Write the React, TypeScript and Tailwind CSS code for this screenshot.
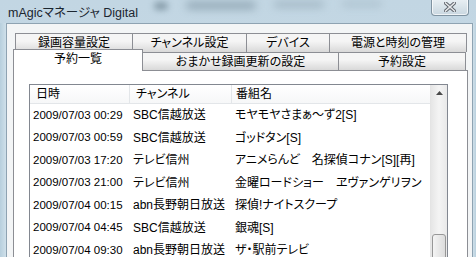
const rows = [
  { date: '2009/07/03 00:29', ch: 'SBC信越放送', title: 'モヤモヤさまぁ～ず2[S]' },
  { date: '2009/07/03 00:59', ch: 'SBC信越放送', title: 'ゴッドタン[S]' },
  { date: '2009/07/03 17:20', ch: 'テレビ信州', title: 'アニメらんど　名探偵コナン[S][再]' },
  { date: '2009/07/03 21:00', ch: 'テレビ信州', title: '金曜ロードショー　ヱヴァンゲリヲン　新劇場版：序' },
  { date: '2009/07/04 00:15', ch: 'abn長野朝日放送', title: '探偵!ナイトスクープ' },
  { date: '2009/07/04 04:45', ch: 'SBC信越放送', title: '銀魂[S]' },
  { date: '2009/07/04 09:30', ch: 'abn長野朝日放送', title: 'ザ・駅前テレビ' },
];

const backTabs = [
  { label: '録画容量設定', w: 'w-[117px]' },
  { label: 'チャンネル設定', w: 'w-[114px]' },
  { label: 'デバイス', w: 'w-[83px]' },
  { label: '電源と時刻の管理', w: 'w-[138px] border-r' },
];

const tabBase =
  'flex items-start justify-center border-l border-t border-[#8c8e94] bg-gradient-to-b from-[#f5f5f5] from-40% to-[#d9d9d9] text-[12px] leading-[16px] text-black';

export default function App() {
  return (
    <div className="w-[476px] h-[257px] overflow-hidden bg-gradient-to-b from-[#c2d6e3] to-[#c9dce7] font-['Liberation_Sans','Noto_Sans_CJK_JP',sans-serif] [font-feature-settings:'palt']">
      {/* Title bar */}
      <div className="h-[23px] flex items-start">
        <span className="ml-[8px] mt-[5px] text-[12.5px] leading-[16px] text-[#1b2630]">
          mAgicマネージャ Digital
        </span>
        <div className="flex-1 flex items-start gap-[18px] pl-[16px] pt-[2px] opacity-60">
          <div className="w-[14px] h-[8px] rounded-full bg-[#5f7684] blur-[3px]" />
          <div className="w-[70px] h-[7px] rounded-full bg-[#6e8593] blur-[4px]" />
          <div className="w-[50px] h-[5px] rounded-full bg-[#7f95a2] blur-[4px]" />
          <div className="w-[40px] h-[4px] rounded-full bg-[#8fa5b2] blur-[4px]" />
        </div>
        <div className="mr-[7px] w-[38px] h-[17px] -mt-px flex items-center justify-center rounded-b-[4px] border border-t-0 border-[#7f93a1] bg-gradient-to-b from-[#e9f0f4] to-[#c9d7e0] shadow-[inset_0_0_0_1px_rgba(255,255,255,0.7)]">
          <svg width="12" height="10" viewBox="0 0 12 10">
            <path d="M1.5 1 L10.5 9 M10.5 1 L1.5 9" stroke="#5a6068" strokeWidth="3.4" strokeLinecap="square" />
            <path d="M1.5 1 L10.5 9 M10.5 1 L1.5 9" stroke="#e6e8ea" strokeWidth="1.6" strokeLinecap="square" />
          </svg>
        </div>
      </div>

      <div className="flex h-[234px]">
        <div className="w-[6px] bg-gradient-to-r from-[#b7cfdd] to-[#cfe0ea]" />
        {/* Client area */}
        <div className="w-[467px] border-l border-t border-r border-[#8ea3b2] bg-[#f3f5f6] pt-[9px] pl-[6px] pr-[4px]">
          {/* Back row */}
          <div className="flex h-[19px] pl-[2px]">
            {backTabs.map((t) => (
              <div key={t.label} className={`${tabBase} ${t.w} pt-[1px]`}>
                {t.label}
              </div>
            ))}
          </div>
          {/* Front row */}
          <div className="flex items-end h-[18px]">
            <div className="relative z-10 w-[130px] h-[22px] -mb-px flex items-start justify-center border-l border-t border-r border-[#8c8e94] bg-white pt-[1px] text-[12px] leading-[16px] text-black">
              予約一覧
            </div>
            <div className={`${tabBase} w-[195px] h-[18px] border-l-0 pt-[1px]`}>おまかせ録画更新の設定</div>
            <div className={`${tabBase} w-[128px] h-[18px] border-r pt-[1px]`}>予約設定</div>
          </div>
          {/* Panel */}
          <div className="h-[200px] border border-[#8c8e94] bg-white pt-[13px] pl-[15px] pr-[19px]">
            <div className="flex h-[190px] border border-[#828790] bg-white">
              <div className="flex-1 overflow-hidden">
                {/* Header */}
                <div className="flex h-[19px] border-b border-[#e3e6e9] bg-gradient-to-b from-white to-[#f6f7f8] text-[12px] leading-[19px] text-black">
                  <div className="w-[100px] shrink-0 pl-[6px] border-r border-[#e3e6e9]">日時</div>
                  <div className="w-[102px] shrink-0 pl-[6px] border-r border-[#e3e6e9]">チャンネル</div>
                  <div className="flex-1 pl-[4px] whitespace-nowrap">番組名</div>
                </div>
                {rows.map((r) => (
                  <div key={r.date} className="flex h-[22.5px] items-center text-[12px] text-black whitespace-nowrap">
                    <div className="w-[100px] shrink-0 pl-[3px] text-[11.5px]">{r.date}</div>
                    <div className="w-[102px] shrink-0 pl-[3px]">{r.ch}</div>
                    <div className="flex-1 pl-[3px] overflow-hidden">{r.title}</div>
                  </div>
                ))}
              </div>
              {/* Scrollbar */}
              <div className="w-[17px] shrink-0 flex flex-col border-l border-[#e4e4e4] bg-gradient-to-r from-[#e6e6e6] via-[#f4f4f4] to-[#e9e9e9]">
                <div className="h-[17px] flex items-center justify-center">
                  <svg width="7" height="4" viewBox="0 0 7 4">
                    <path d="M0 4 L3.5 0 L7 4 Z" fill="#4a4a4a" />
                  </svg>
                </div>
                <div className="h-[136px]" />
                <div className="mx-px h-[40px] rounded-[3px] border border-[#979797] bg-gradient-to-r from-[#f4f4f4] to-[#dcdcdc]" />
              </div>
            </div>
          </div>
        </div>
        <div className="w-[3px] bg-gradient-to-r from-[#cfe0ea] to-[#b9d0de]" />
      </div>
    </div>
  );
}
